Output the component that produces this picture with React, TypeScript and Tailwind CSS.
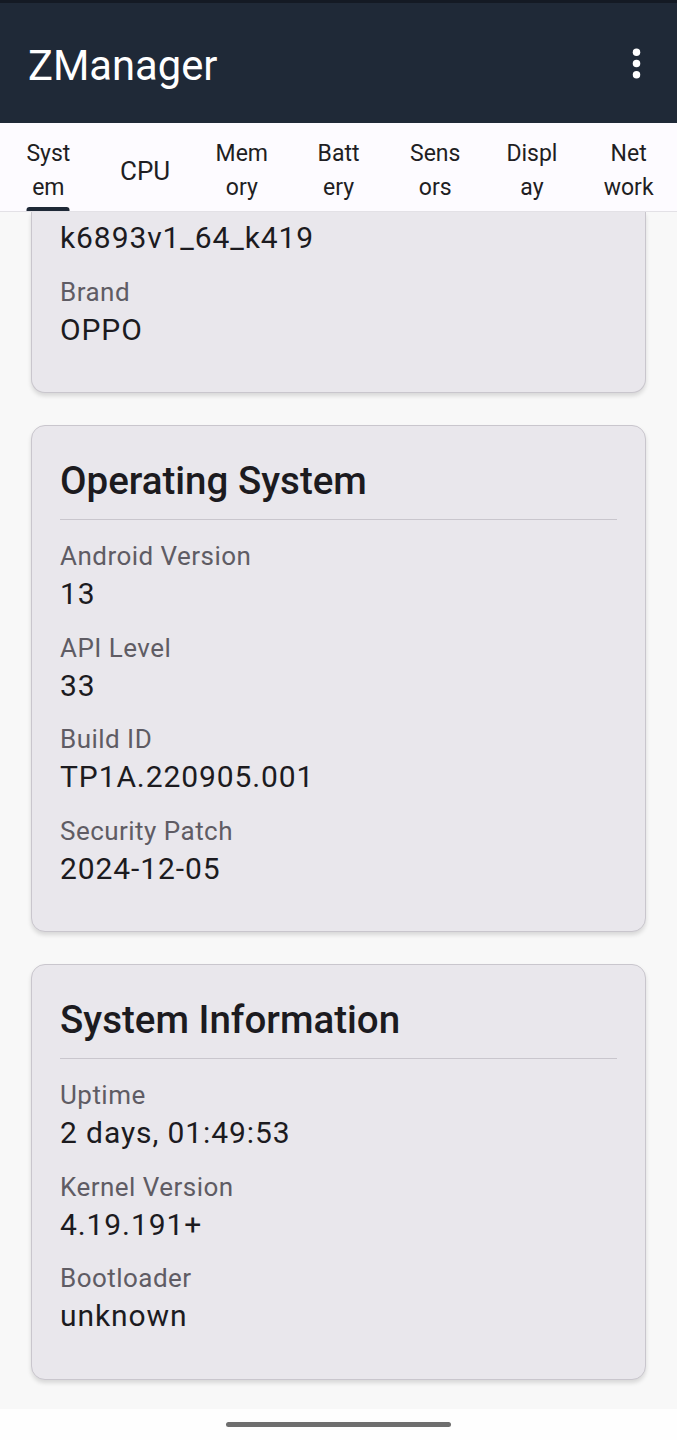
const tabs = [
  { lines: ["Syst", "em"], active: true },
  { lines: ["CPU"] },
  { lines: ["Mem", "ory"] },
  { lines: ["Batt", "ery"] },
  { lines: ["Sens", "ors"] },
  { lines: ["Displ", "ay"] },
  { lines: ["Net", "work"] },
];

const osRows = [
  { label: "Android Version", value: "13" },
  { label: "API Level", value: "33" },
  { label: "Build ID", value: "TP1A.220905.001" },
  { label: "Security Patch", value: "2024-12-05" },
];

const sysRows = [
  { label: "Uptime", value: "2 days, 01:49:53" },
  { label: "Kernel Version", value: "4.19.191+" },
  { label: "Bootloader", value: "unknown" },
];

const Row = ({ label, value }: { label?: string; value: string }) => (
  <div className="flex flex-col pb-[15.5px]">
    {label && (
      <span className="text-[26px] leading-[34px] tracking-[0.47px] text-[#5f5c64]">{label}</span>
    )}
    <span className="text-[30px] leading-[42px] tracking-[0.9px] text-[#1c1b1f]">{value}</span>
  </div>
);

const Card = ({ title, rows }: { title: string; rows: { label: string; value: string }[] }) => (
  <section className="rounded-[14px] border border-[#c9c6cd] bg-[#e9e7ec] px-[28px] pt-[29px] pb-[26px] shadow-[0_3px_4px_rgba(0,0,0,0.13)]">
    <h2 className="text-[38.5px] leading-[52px] font-medium text-[#1c1b1f]">{title}</h2>
    <div className="mt-[12px] mb-[19px] h-px bg-[#c9c6cd]" />
    {rows.map((r) => (
      <Row key={r.label} label={r.label} value={r.value} />
    ))}
  </section>
);

export default function App() {
  return (
    <div className="flex h-[1440px] w-full flex-col bg-[#f8f8f8] font-['Roboto',sans-serif]">
      <div className="h-[3px] bg-[#141a24]" />

      {/* Top bar */}
      <header className="flex h-[120px] items-center justify-between bg-[#1f2937] pl-[28px] pr-[18px]">
        <h1 className="pt-[5px] text-[41.7px] leading-none text-white">ZManager</h1>
        <svg width="45" height="45" viewBox="0 0 24 24" fill="#ffffff" aria-hidden="true">
          <circle cx="12" cy="6" r="2" />
          <circle cx="12" cy="12" r="2" />
          <circle cx="12" cy="18" r="2" />
        </svg>
      </header>

      {/* Tabs */}
      <nav className="grid h-[89px] grid-cols-7 border-b border-[#e3e1e6] bg-[#fdfbff]">
        {tabs.map((t) => (
          <div key={t.lines.join("")} className="relative flex flex-col items-center justify-center pt-[8px]">
            {t.lines.length === 1 ? (
              <span className="text-[26px] leading-[34px] text-[#1f1e23]">{t.lines[0]}</span>
            ) : (
              <span className="flex flex-col items-center text-[23px] leading-[34px] text-[#1f1e23]">
                <span>{t.lines[0]}</span>
                <span>{t.lines[1]}</span>
              </span>
            )}
            {t.active && (
              <span className="absolute bottom-0 left-1/2 h-[4px] w-[43px] -translate-x-1/2 rounded-t-[3px] bg-[#1f2937]" />
            )}
          </div>
        ))}
      </nav>

      {/* Content */}
      <main className="flex flex-1 flex-col gap-[32px] overflow-hidden px-[31px]">
        <section className="rounded-b-[14px] border border-t-0 border-[#c9c6cd] bg-[#e9e7ec] px-[28px] pt-[5px] pb-[26px] shadow-[0_3px_4px_rgba(0,0,0,0.13)]">
          <Row value="k6893v1_64_k419" />
          <Row label="Brand" value="OPPO" />
        </section>
        <Card title="Operating System" rows={osRows} />
        <Card title="System Information" rows={sysRows} />
      </main>

      {/* Gesture bar */}
      <div className="flex h-[31px] justify-center bg-[#fefefe] pt-[13px]">
        <div className="h-[5px] w-[225px] rounded-full bg-[#6e6e6e]" />
      </div>
    </div>
  );
}
